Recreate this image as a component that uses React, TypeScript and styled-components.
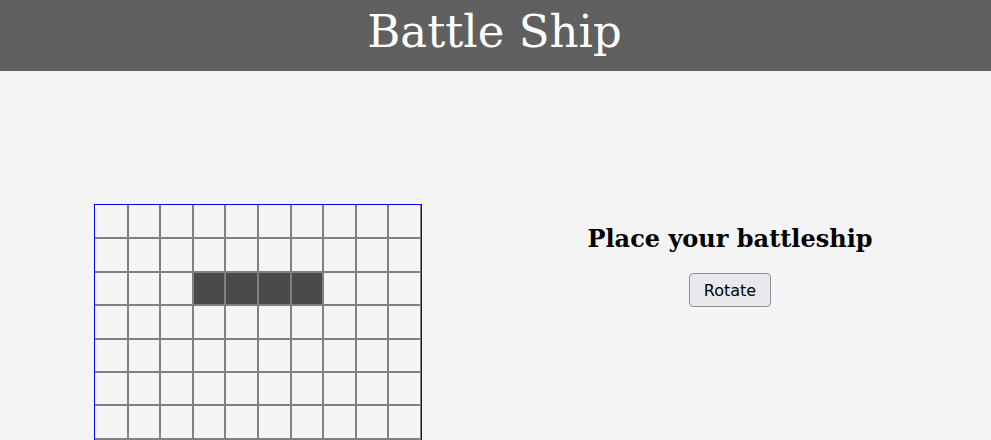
import React from "react";
import styled, { createGlobalStyle } from "styled-components";

const GlobalStyle = createGlobalStyle`
  html, body {
    margin: 0;
    padding: 0;
    background: #f4f4f4;
    font-family: "DejaVu Serif", serif;
  }
`;

const Header = styled.header`
  height: 71px;
  background: #606060;
  display: flex;
  justify-content: center;
  align-items: flex-start;
  box-sizing: border-box;
  padding: 5px 2px 0 0;
`;

const Title = styled.h1`
  margin: 0;
  color: #ffffff;
  font-family: "DejaVu Serif", serif;
  font-weight: normal;
  font-size: 45px;
  line-height: normal;
`;

const Main = styled.main`
  display: flex;
  align-items: flex-start;
  padding: 133px 0 0 94px;
  gap: 47px;
`;

const Board = styled.div`
  width: 328px;
  box-sizing: border-box;
  border: 1px solid #0000ff;
  display: grid;
  grid-template-columns: repeat(10, 1fr);
  grid-auto-rows: 33.4px;
`;

const Cell = styled.div<{ $ship?: boolean }>`
  box-sizing: border-box;
  border: 1px solid #808080;
  background: ${(p) => (p.$ship ? "#4a4a4a" : "#f5f5f5")};
  &:nth-child(10n + 1) {
    border-left: none;
  }
  &:nth-child(-n + 10) {
    border-top: none;
  }
`;

const Panel = styled.section`
  flex: 1;
  display: flex;
  flex-direction: column;
  align-items: center;
  padding-top: 20px;
`;

const Heading = styled.h2`
  margin: 0 0 20px;
  font-family: "DejaVu Serif", serif;
  font-weight: bold;
  font-size: 24px;
  line-height: normal;
  color: #000;
`;

const Button = styled.button`
  font-family: "DejaVu Sans", sans-serif;
  font-size: 16px;
  color: #000;
  background: #e9e9ed;
  border: 1px solid #8f8f9d;
  border-radius: 4px;
  padding: 6px 13.5px;
  height: 34px;
  cursor: pointer;
`;

const ship = new Set([23, 24, 25, 26]);

export default function App() {
  return (
    <>
      <GlobalStyle />
      <Header>
        <Title>Battle Ship</Title>
      </Header>
      <Main>
        <Board>
          {Array.from({ length: 100 }, (_, i) => (
            <Cell key={i} $ship={ship.has(i)} />
          ))}
        </Board>
        <Panel>
          <Heading>Place your battleship</Heading>
          <Button>Rotate</Button>
        </Panel>
      </Main>
    </>
  );
}
